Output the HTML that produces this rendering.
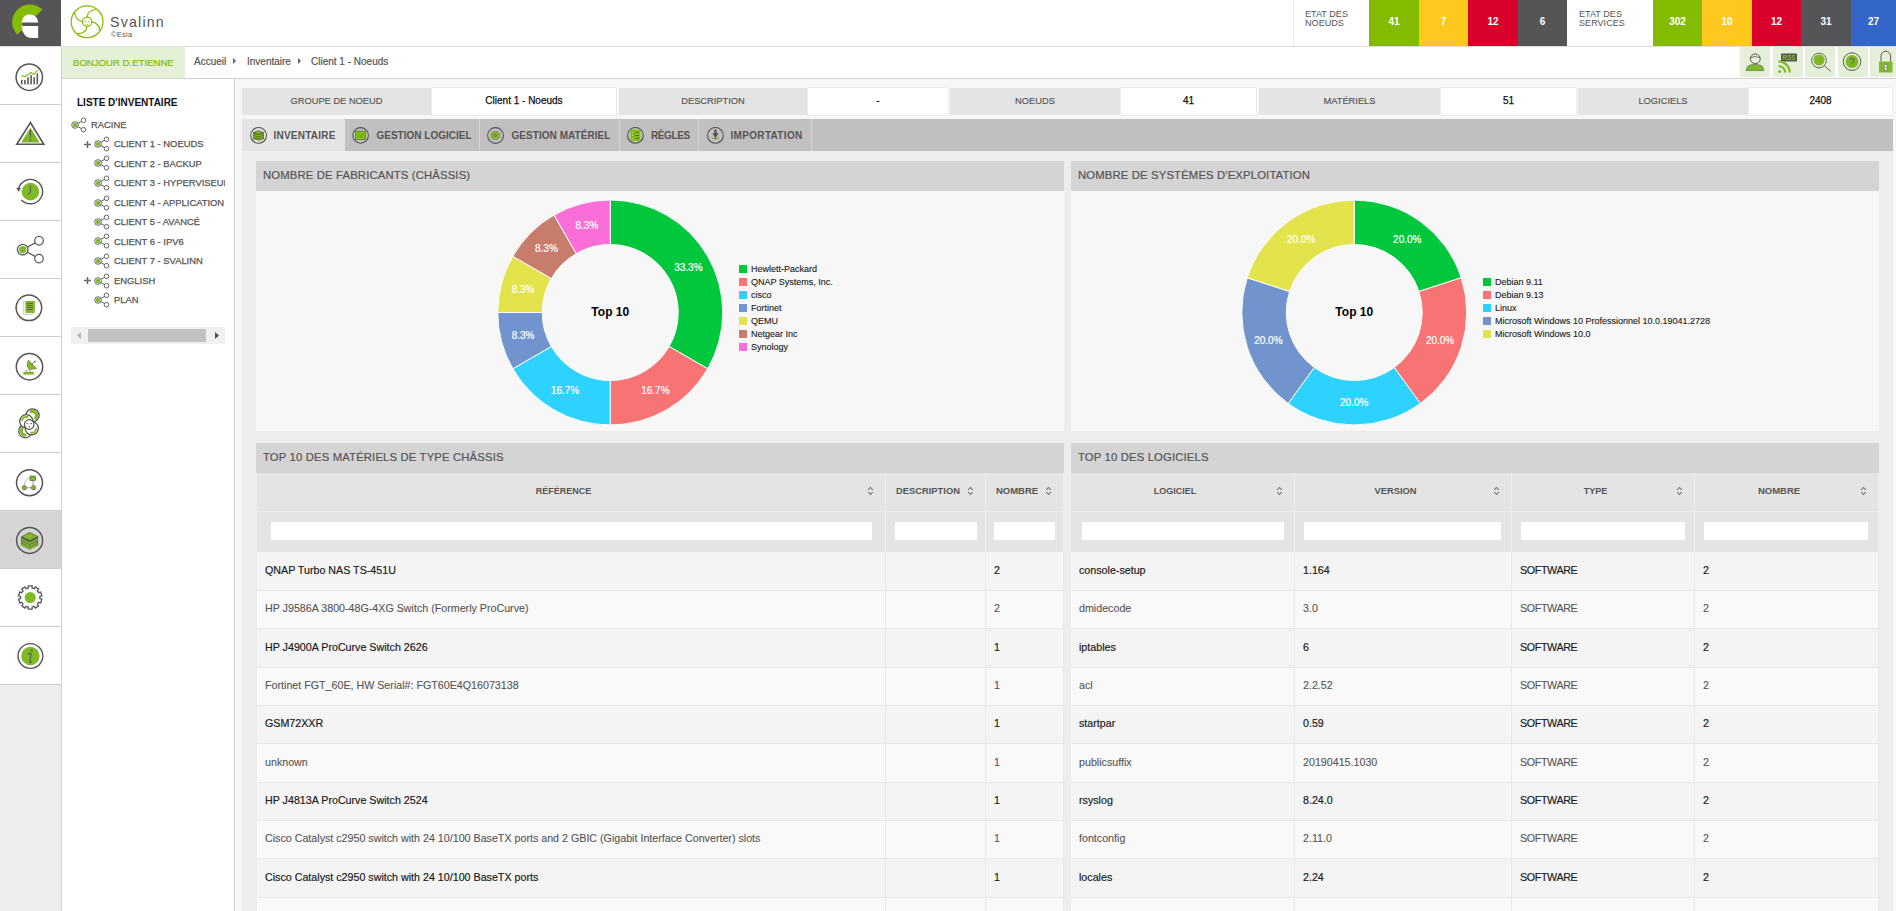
<!DOCTYPE html>
<html><head><meta charset="utf-8">
<style>
*{box-sizing:border-box;margin:0;padding:0}
html,body{width:1896px;height:911px;overflow:hidden;background:#f7f7f7;font-family:"Liberation Sans",sans-serif;color:#555}
.abs{position:absolute}
#logo{left:0;top:0;width:61px;height:46px;background:#555557}
#header{left:0;top:0;width:1896px;height:47px;background:#fff;border-bottom:1px solid #dedede}
#nav{left:0;top:47px;width:62px;height:864px;background:#ededed;border-right:1px solid #d0d0d0}
.ni{position:absolute;left:0;width:61px;height:58px;background:#fff;border-bottom:1px solid #d0d0d0}
.ni.sel{background:#d6d4d5;border-top:1px solid #d0d0d0;margin-top:-1px;height:59px}
#bread{left:62px;top:47px;width:1834px;height:32px;background:#fff;border-bottom:1px solid #d0d0d0}
#bonjour{left:62px;top:47px;width:123px;height:31px;background:#e5f0d9;color:#84bd00;-webkit-text-stroke:0.2px #84bd00;font-size:9.6px;line-height:31px;padding-left:11px;white-space:nowrap}
.bc{top:56px;font-size:10px;color:#555;white-space:nowrap;line-height:12px;-webkit-text-stroke:0.2px #555}
.bca{top:58px;width:0;height:0;border-top:3.5px solid transparent;border-bottom:3.5px solid transparent;border-left:3.5px solid #666}
.hib{top:47px;width:30px;height:30px;background:#e5efd9}
#tree{left:62px;top:79px;width:173px;height:832px;background:#fff;border-right:1px solid #d0d0d0;overflow:hidden}
.tt{font-size:10px;font-weight:bold;color:#111;white-space:nowrap;line-height:12px}
.ti{font-size:9.4px;color:#555;white-space:nowrap;line-height:12px;-webkit-text-stroke:0.25px #555}
.plus{font-size:12px;color:#555;line-height:12px;font-weight:bold}
#main{left:235px;top:79px;width:1661px;height:832px;background:#f7f7f7}
.il{-webkit-text-stroke:0.15px #555;top:88px;height:27px;background:#e4e4e4;font-size:9.3px;line-height:27px;text-align:center;color:#555;white-space:nowrap}
.iv{-webkit-text-stroke:0.25px #111;top:87px;height:29px;background:#fff;border:1px solid #ececec;font-size:10px;line-height:26px;text-align:center;color:#111;white-space:nowrap}
#tabs{left:242px;top:119px;width:1651px;height:32px;background:#c1bfc0}
.tab{top:119px;height:32px;background:#c1bfc0;font-size:10px;font-weight:bold;line-height:12px;color:#555;white-space:nowrap;border-right:1px solid #d6d6d6}
.tab span{position:absolute;top:10.6px}
.tab.act{background:#e4e4e4;border-right:none}
.tab svg{position:absolute;left:8px;top:7.5px}
#cont{left:242px;top:151px;width:1651px;height:760px;background:#ededed}
.ph{-webkit-text-stroke:0.2px #555;height:30px;background:#d4d4d4;font-size:11.3px;letter-spacing:0.15px;line-height:28px;padding-left:7px;color:#555;white-space:nowrap}
.pb{background:#f7f7f7}
.th{background:#e4e4e4;border-right:1px solid #eeeeee}
.thl{font-size:9px;font-weight:bold;color:#555;text-align:center;line-height:12px;white-space:nowrap}
.tf{background:#e4e4e4;border-top:1px solid #ececec;border-right:1px solid #eeeeee}
.inp{position:absolute;top:10px;height:18px;background:#fff}
.td{border-right:1px solid #e8e8e8;border-bottom:1px solid #e8e8e8;font-size:10.7px;line-height:38px;padding-left:8px;white-space:nowrap;overflow:hidden}
svg text{font-family:"Liberation Sans",sans-serif}
</style></head><body>
<div id="header" class="abs"></div>
<div id="logo" class="abs"></div>
<svg class="abs" style="left:0;top:0" width="61" height="46" viewBox="0 0 61 46">
  <path d="M42.4,9.6 A17.6,17.6 0 1 0 17.4,34.8 L24.1,27.9 A8.3,8.3 0 0 1 35.8,16.2 Z" fill="#84bd00"/>
  <path d="M21.6,22.5 A8.3,8.3 0 0 1 38.2,22.5 Z" fill="#fff"/>
  <path d="M21.7,26 L38.1,26 L38.1,37.9 L30.5,37.9 A9,11.9 0 0 1 21.7,26 Z" fill="#fff"/>
</svg>
<svg class="abs" style="left:68px;top:3px" width="40" height="38" viewBox="0 0 40 38">
  <g fill="none" stroke="#84bd00" stroke-width="1.25">
   <circle cx="19.1" cy="18.8" r="15.9"/>
   <circle cx="19.1" cy="18.8" r="4.6"/>
   <path d="M14.5,18.3 C10,18 6.8,14.5 6.6,9.1"/>
   <path d="M19.1,14.2 C19.3,10 22,7 28.1,6.5"/>
   <path d="M23.7,18.8 C28,19 31.5,23 32,27.1"/>
   <path d="M18.9,23.4 C18.8,28 16,30.5 9.2,30.6"/>
  </g>
  <path d="M16.5,18.5 h1.5 M20.2,18.5 h1.6" stroke="#84bd00" stroke-width="0.9"/>
  <circle cx="19.1" cy="21.4" r="0.7" fill="#84bd00"/>
</svg>
<div class="abs" style="left:110px;top:14px;font-size:14.2px;letter-spacing:1.2px;color:#555;line-height:16px;white-space:nowrap">Svalinn</div>
<div class="abs" style="left:111px;top:31px;font-size:7.6px;letter-spacing:0.2px;color:#555;line-height:8px;white-space:nowrap">©Esia</div>

<div class="abs" style="left:1293px;top:0;width:1px;height:46px;background:#e6e6e6"></div>
<div class="abs" style="left:1305px;top:10px;font-size:9.1px;line-height:8.6px;color:#555;white-space:nowrap">ETAT DES<br>NOEUDS</div>
<div class="abs sb" style="left:1369px;width:50px;background:#84bb00">41</div>
<div class="abs sb" style="left:1419px;width:49px;background:#fec81e">7</div>
<div class="abs sb" style="left:1468px;width:50px;background:#d9002c">12</div>
<div class="abs sb" style="left:1518px;width:49px;background:#555557">6</div>
<div class="abs" style="left:1579px;top:10px;font-size:9.1px;line-height:8.6px;color:#555;white-space:nowrap">ETAT DES<br>SERVICES</div>
<div class="abs sb" style="left:1653px;width:49px;background:#84bb00">302</div>
<div class="abs sb" style="left:1702px;width:50px;background:#fec81e">10</div>
<div class="abs sb" style="left:1752px;width:49px;background:#d9002c">12</div>
<div class="abs sb" style="left:1801px;width:50px;background:#555557">31</div>
<div class="abs sb" style="left:1851px;width:45px;background:#3465c8">27</div>
<style>.sb{top:0;height:46px;color:#fff;font-weight:bold;font-size:10px;line-height:43px;text-align:center}</style>

<div id="nav" class="abs">
<div class="ni" style="top:0px"></div>
<div class="ni" style="top:58px"></div>
<div class="ni" style="top:116px"></div>
<div class="ni" style="top:174px"></div>
<div class="ni" style="top:232px"></div>
<div class="ni" style="top:290px"></div>
<div class="ni" style="top:348px"></div>
<div class="ni" style="top:406px"></div>
<div class="ni sel" style="top:464px"></div>
<div class="ni" style="top:522px"></div>
<div class="ni" style="top:580px"></div>
<svg class="abs" style="left:0;top:-47px" width="61" height="911" viewBox="0 0 61 911"><circle cx="29.3" cy="77.2" r="13.2" fill="none" stroke="#555" stroke-width="1.5"/>
<rect x="21.0" y="79.9" width="1.6" height="4.5" fill="#5a5a5a"/>
<rect x="24.099999999999998" y="80.0" width="1.6" height="4.400000000000006" fill="#5a5a5a"/>
<rect x="27.2" y="77.2" width="1.6" height="7.200000000000003" fill="#5a5a5a"/>
<rect x="30.3" y="75.1" width="1.6" height="9.300000000000011" fill="#5a5a5a"/>
<rect x="33.400000000000006" y="77.2" width="1.6" height="7.200000000000003" fill="#5a5a5a"/>
<rect x="36.5" y="73.4" width="1.6" height="11.0" fill="#5a5a5a"/>
<polyline points="21.5,75.8 24.8,76.5 28,74.8 31,72.5 34,74.5 37.3,70.2" fill="none" stroke="#7fba26" stroke-width="1.2"/>
<path d="M30.4,122.6 L16.8,144.3 L43.8,144.3 Z" fill="none" stroke="#555" stroke-width="1.6" stroke-linejoin="miter"/>
<path d="M30.4,127.6 L21.2,142.6 L39.6,142.6 Z" fill="#7fba26"/>
<path d="M29.5,130 L31.1,130 L30.7,138.3 L29.9,138.3 Z" fill="#555"/><circle cx="30.3" cy="140.3" r="0.9" fill="#555"/>
<circle cx="30.4" cy="191.6" r="8.8" fill="#7fba26"/>
<path d="M21.77,200.23 A12.2,12.2 0 1 0 18.62,188.44" fill="none" stroke="#555" stroke-width="1.4" stroke-linecap="round"/>
<path d="M16.2,187.8 L21,188 L18.5,191.8 Z" fill="#555"/>
<polyline points="30.4,185.2 30.4,192.4 27.8,194.6" fill="none" stroke="#555" stroke-width="1"/>
<line x1="22.7" y1="249.6" x2="39" y2="240.8" stroke="#555" stroke-width="1.2"/>
<line x1="22.7" y1="249.6" x2="39" y2="258.6" stroke="#555" stroke-width="1.2"/>
<circle cx="22.7" cy="249.6" r="5.3" fill="#fff" stroke="#555" stroke-width="1.3"/>
<circle cx="22.7" cy="249.6" r="3.7" fill="#7fba26"/>
<circle cx="39" cy="240.8" r="4.3" fill="#fff" stroke="#555" stroke-width="1.2"/>
<circle cx="39" cy="258.6" r="4.3" fill="#fff" stroke="#555" stroke-width="1.2"/>
<circle cx="28.9" cy="307.8" r="12.8" fill="none" stroke="#555" stroke-width="1.5"/>
<rect x="23.2" y="302" width="9.5" height="12.6" fill="#f4f4f4" stroke="#bbb" stroke-width="0.6"/>
<rect x="25.4" y="301" width="9.4" height="11.9" fill="#7fba26"/>
<rect x="27" y="303.20000000000005" width="5.8" height="0.8" fill="#555"/>
<rect x="27" y="305.20000000000005" width="5.8" height="0.8" fill="#555"/>
<rect x="27" y="307.20000000000005" width="5.8" height="0.8" fill="#555"/>
<rect x="27" y="309.20000000000005" width="5.8" height="0.8" fill="#555"/>
<circle cx="29.5" cy="366.7" r="13.2" fill="none" stroke="#555" stroke-width="1.5"/>
<path d="M28.4,360 C26,364 27,369.5 31,369.5 L36.6,368.6 Z" fill="#7fba26" stroke="#555" stroke-width="0.5"/>
<line x1="31.5" y1="364.5" x2="35" y2="361.5" stroke="#555" stroke-width="0.8"/><circle cx="35" cy="361.5" r="0.8" fill="#555"/>
<path d="M27.5,369.5 L26,371.8 M29,369.5 L30.5,371.8" stroke="#555" stroke-width="0.7"/>
<rect x="23.4" y="371.8" width="10.5" height="2.8" fill="#7fba26"/>
<circle cx="32.5" cy="415.4" r="6.6" fill="#fff" stroke="#555" stroke-width="1.3"/>
<circle cx="25.3" cy="431.2" r="6.6" fill="#fff" stroke="#555" stroke-width="1.3"/>
<circle cx="26.3" cy="421.3" r="6.6" fill="#fff" stroke="#555" stroke-width="1.3"/>
<circle cx="31.8" cy="428.3" r="6.6" fill="#fff" stroke="#555" stroke-width="1.3"/>
<path d="M31.13,411.64 A4.0,4.0 0 0 1 35.56,417.97" fill="none" stroke="#7fba26" stroke-width="3.2" stroke-linecap="round"/>
<path d="M24.95,435.18 A4.0,4.0 0 0 1 22.02,428.91" fill="none" stroke="#7fba26" stroke-width="3.2" stroke-linecap="round"/>
<path d="M22.05,420.16 A4.4,4.4 0 0 1 27.44,417.05" fill="none" stroke="#7fba26" stroke-width="2.0" stroke-linecap="round"/>
<path d="M36.13,429.06 A4.4,4.4 0 0 1 31.04,432.63" fill="none" stroke="#7fba26" stroke-width="2.0" stroke-linecap="round"/>
<circle cx="29.2" cy="424.5" r="4.8" fill="#fff" stroke="#555" stroke-width="1.2"/>
<path d="M26.4,423.6 h1.8 M30.3,423.6 h1.8" stroke="#555" stroke-width="0.9"/><circle cx="29.2" cy="426.8" r="0.75" fill="#555"/>
<circle cx="29.5" cy="482.7" r="13.0" fill="none" stroke="#555" stroke-width="1.5"/>
<rect x="30" y="476" width="5.6" height="4.6" fill="#7fba26" stroke="#555" stroke-width="0.6"/>
<circle cx="24.3" cy="487.8" r="2.2" fill="#7fba26" stroke="#555" stroke-width="0.6"/>
<circle cx="33.5" cy="487.8" r="2.2" fill="#7fba26" stroke="#555" stroke-width="0.6"/>
<path d="M29.8,478 C26.5,478.5 24.5,481.5 24.3,485.3" fill="none" stroke="#555" stroke-width="0.6" stroke-dasharray="0.8 0.5"/>
<path d="M33,480.6 V485.6 M26.6,487.8 H31.2" stroke="#555" stroke-width="0.6"/>
<circle cx="29.6" cy="540.4" r="13.0" fill="none" stroke="#555" stroke-width="1.5"/>
<path d="M21.2,536.4 L29.7,532 L38.2,536.4 L38.2,545.2 L29.7,549.8 L21.2,545.2 Z" fill="#555"/>
<path d="M21.9,538.3 L29.7,542.4 L37.5,538.3 L37.5,540.2 L29.7,544.3 L21.9,540.2 Z" fill="#7fba26"/>
<path d="M21.9,540.9 L29.7,545.0 L37.5,540.9 L37.5,542.8000000000001 L29.7,546.9 L21.9,542.8000000000001 Z" fill="#7fba26"/>
<path d="M21.9,543.5 L29.7,547.6 L37.5,543.5 L37.5,545.4000000000001 L29.7,549.5 L21.9,545.4000000000001 Z" fill="#7fba26"/>
<path d="M22.3,536.4 L29.7,532.8 L37.1,536.4 L29.7,540.2 Z" fill="#7fba26"/>
<polygon points="27.20,588.27 28.27,587.99 28.25,585.86 32.15,585.86 32.13,587.99 33.20,588.27 33.20,588.27 34.22,588.67 35.47,586.94 38.62,589.23 37.35,590.95 38.05,591.80 38.05,591.80 38.64,592.72 40.67,592.05 41.87,595.76 39.84,596.40 39.90,597.50 39.90,597.50 39.84,598.60 41.87,599.24 40.67,602.95 38.64,602.28 38.05,603.20 38.05,603.20 37.35,604.05 38.62,605.77 35.47,608.06 34.22,606.33 33.20,606.73 33.20,606.73 32.13,607.01 32.15,609.14 28.25,609.14 28.27,607.01 27.20,606.73 27.20,606.73 26.18,606.33 24.93,608.06 21.78,605.77 23.05,604.05 22.35,603.20 22.35,603.20 21.76,602.28 19.73,602.95 18.53,599.24 20.56,598.60 20.50,597.50 20.50,597.50 20.56,596.40 18.53,595.76 19.73,592.05 21.76,592.72 22.35,591.80 22.35,591.80 23.05,590.95 21.78,589.23 24.93,586.94 26.18,588.67 27.20,588.27" fill="none" stroke="#555" stroke-width="1.3" stroke-linejoin="miter"/>
<circle cx="30.2" cy="597.5" r="5.5" fill="#7fba26"/>
<circle cx="30.4" cy="656" r="12.4" fill="none" stroke="#555" stroke-width="1.4"/>
<circle cx="30.4" cy="656" r="9.2" fill="#7fba26"/>
<circle cx="31.7" cy="650.5" r="1.0" fill="#555"/>
<path d="M28.3,654.2 C29.5,653 31.2,653 31,654.5 L29.8,661.5 C29.7,662.5 30.5,662.6 31.5,662" fill="none" stroke="#555" stroke-width="1.1" stroke-linecap="round"/></svg>
</div>

<div id="bread" class="abs"></div>
<div id="bonjour" class="abs">BONJOUR D.ETIENNE</div>
<div class="abs bc" style="left:194px">Accueil</div>
<div class="abs bca" style="left:233px"></div>
<div class="abs bc" style="left:247px">Inventaire</div>
<div class="abs bca" style="left:298px"></div>
<div class="abs bc" style="left:311px">Client 1 - Noeuds</div>

<div class="abs hib" style="left:1740px"></div>
<div class="abs hib" style="left:1773px"></div>
<div class="abs hib" style="left:1805px"></div>
<div class="abs hib" style="left:1838px"></div>
<div class="abs hib" style="left:1870px;width:26px"></div>
<svg class="abs" style="left:1730px;top:44px" width="166" height="40" viewBox="0 0 166 40">
  <!-- user -->
  <circle cx="25.3" cy="14.8" r="4.9" fill="none" stroke="#555" stroke-width="1"/>
  <path d="M20.5,13.8 C23,12.3 27.6,12.3 30.1,13.8" fill="none" stroke="#555" stroke-width="0.8"/>
  <path d="M16,26.6 L17.5,22.6 C19,21 22,20.5 25,20.5 C28,20.5 31,21 32.5,22.6 L34,26.6 Z" fill="#7fba26" stroke="#555" stroke-width="0.6"/>
  <!-- rss -->
  <rect x="51" y="9.5" width="16" height="8" rx="1" fill="#555"/>
  <text x="59" y="16.3" text-anchor="middle" font-size="6.5" font-weight="bold" fill="#7fba26">RSS</text>
  <circle cx="49.6" cy="27.6" r="1.5" fill="#7fba26"/>
  <path d="M48.6,22 A6.6,6.6 0 0 1 55.2,28.6" fill="none" stroke="#7fba26" stroke-width="2.2"/>
  <path d="M48.6,17.4 A11.2,11.2 0 0 1 59.8,28.6" fill="none" stroke="#7fba26" stroke-width="2.2"/>
  <!-- search -->
  <circle cx="89" cy="16.5" r="7.4" fill="none" stroke="#555" stroke-width="0.9"/>
  <circle cx="89" cy="16" r="5.6" fill="#7fba26"/>
  <line x1="94.3" y1="21.8" x2="100.8" y2="27.5" stroke="#555" stroke-width="0.9"/>
  <!-- help -->
  <circle cx="122" cy="17.6" r="8.8" fill="none" stroke="#555" stroke-width="1"/>
  <circle cx="122" cy="17.6" r="6.5" fill="#7fba26"/>
  <text x="122" y="21.6" text-anchor="middle" font-size="10" fill="#555">?</text>
  <!-- lock -->
  <path d="M151,17.5 V12 A4.8,4.8 0 0 1 160.6,12 V17.5" fill="none" stroke="#555" stroke-width="1"/>
  <rect x="149" y="17.5" width="13.5" height="11" fill="#7fba26"/>
  <circle cx="155.7" cy="22" r="1.6" fill="#fff" stroke="#555" stroke-width="0.5"/>
  <path d="M154.7,23 L154.3,26.3 L157.1,26.3 L156.7,23 Z" fill="#fff" stroke="#555" stroke-width="0.5"/>
</svg>

<div id="tree" class="abs">
<div class="abs tt" style="left:15px;top:17.5px">LISTE D'INVENTAIRE</div>
<div class="abs" style="left:0;top:0;width:163px;height:300px;overflow:hidden">
<svg class="abs" style="left:9px;top:38px" width="16" height="16" viewBox="0 0 16 16"><line x1="4" y1="8" x2="12.5" y2="3.3" stroke="#555" stroke-width="0.9"/><line x1="4" y1="8" x2="12.5" y2="12.7" stroke="#555" stroke-width="0.9"/><circle cx="4" cy="8" r="3.3" fill="#fff" stroke="#555" stroke-width="0.9"/><circle cx="4" cy="8" r="2.2" fill="#7fba26"/><circle cx="12.5" cy="3.3" r="2.3" fill="#fff" stroke="#555" stroke-width="0.9"/><circle cx="12.5" cy="12.7" r="2.3" fill="#fff" stroke="#555" stroke-width="0.9"/></svg>
<div class="abs ti" style="left:29px;top:39.5px">RACINE</div>
<svg class="abs" style="left:32px;top:57px" width="16" height="16" viewBox="0 0 16 16"><line x1="4" y1="8" x2="12.5" y2="3.3" stroke="#555" stroke-width="0.9"/><line x1="4" y1="8" x2="12.5" y2="12.7" stroke="#555" stroke-width="0.9"/><circle cx="4" cy="8" r="3.3" fill="#fff" stroke="#555" stroke-width="0.9"/><circle cx="4" cy="8" r="2.2" fill="#7fba26"/><circle cx="12.5" cy="3.3" r="2.3" fill="#fff" stroke="#555" stroke-width="0.9"/><circle cx="12.5" cy="12.7" r="2.3" fill="#fff" stroke="#555" stroke-width="0.9"/></svg>
<div class="abs ti" style="left:52px;top:59.0px">CLIENT 1 - NOEUDS</div>
<svg class="abs" style="left:20.5px;top:60.5px" width="9" height="9" viewBox="0 0 9 9"><path d="M1,4.5 H8 M4.5,1 V8" stroke="#666" stroke-width="1.5"/></svg>
<svg class="abs" style="left:32px;top:76px" width="16" height="16" viewBox="0 0 16 16"><line x1="4" y1="8" x2="12.5" y2="3.3" stroke="#555" stroke-width="0.9"/><line x1="4" y1="8" x2="12.5" y2="12.7" stroke="#555" stroke-width="0.9"/><circle cx="4" cy="8" r="3.3" fill="#fff" stroke="#555" stroke-width="0.9"/><circle cx="4" cy="8" r="2.2" fill="#7fba26"/><circle cx="12.5" cy="3.3" r="2.3" fill="#fff" stroke="#555" stroke-width="0.9"/><circle cx="12.5" cy="12.7" r="2.3" fill="#fff" stroke="#555" stroke-width="0.9"/></svg>
<div class="abs ti" style="left:52px;top:78.5px">CLIENT 2 - BACKUP</div>
<svg class="abs" style="left:32px;top:96px" width="16" height="16" viewBox="0 0 16 16"><line x1="4" y1="8" x2="12.5" y2="3.3" stroke="#555" stroke-width="0.9"/><line x1="4" y1="8" x2="12.5" y2="12.7" stroke="#555" stroke-width="0.9"/><circle cx="4" cy="8" r="3.3" fill="#fff" stroke="#555" stroke-width="0.9"/><circle cx="4" cy="8" r="2.2" fill="#7fba26"/><circle cx="12.5" cy="3.3" r="2.3" fill="#fff" stroke="#555" stroke-width="0.9"/><circle cx="12.5" cy="12.7" r="2.3" fill="#fff" stroke="#555" stroke-width="0.9"/></svg>
<div class="abs ti" style="left:52px;top:98.0px">CLIENT 3 - HYPERVISEUR</div>
<svg class="abs" style="left:32px;top:116px" width="16" height="16" viewBox="0 0 16 16"><line x1="4" y1="8" x2="12.5" y2="3.3" stroke="#555" stroke-width="0.9"/><line x1="4" y1="8" x2="12.5" y2="12.7" stroke="#555" stroke-width="0.9"/><circle cx="4" cy="8" r="3.3" fill="#fff" stroke="#555" stroke-width="0.9"/><circle cx="4" cy="8" r="2.2" fill="#7fba26"/><circle cx="12.5" cy="3.3" r="2.3" fill="#fff" stroke="#555" stroke-width="0.9"/><circle cx="12.5" cy="12.7" r="2.3" fill="#fff" stroke="#555" stroke-width="0.9"/></svg>
<div class="abs ti" style="left:52px;top:117.5px">CLIENT 4 - APPLICATION</div>
<svg class="abs" style="left:32px;top:135px" width="16" height="16" viewBox="0 0 16 16"><line x1="4" y1="8" x2="12.5" y2="3.3" stroke="#555" stroke-width="0.9"/><line x1="4" y1="8" x2="12.5" y2="12.7" stroke="#555" stroke-width="0.9"/><circle cx="4" cy="8" r="3.3" fill="#fff" stroke="#555" stroke-width="0.9"/><circle cx="4" cy="8" r="2.2" fill="#7fba26"/><circle cx="12.5" cy="3.3" r="2.3" fill="#fff" stroke="#555" stroke-width="0.9"/><circle cx="12.5" cy="12.7" r="2.3" fill="#fff" stroke="#555" stroke-width="0.9"/></svg>
<div class="abs ti" style="left:52px;top:137.0px">CLIENT 5 - AVANCÉ</div>
<svg class="abs" style="left:32px;top:154px" width="16" height="16" viewBox="0 0 16 16"><line x1="4" y1="8" x2="12.5" y2="3.3" stroke="#555" stroke-width="0.9"/><line x1="4" y1="8" x2="12.5" y2="12.7" stroke="#555" stroke-width="0.9"/><circle cx="4" cy="8" r="3.3" fill="#fff" stroke="#555" stroke-width="0.9"/><circle cx="4" cy="8" r="2.2" fill="#7fba26"/><circle cx="12.5" cy="3.3" r="2.3" fill="#fff" stroke="#555" stroke-width="0.9"/><circle cx="12.5" cy="12.7" r="2.3" fill="#fff" stroke="#555" stroke-width="0.9"/></svg>
<div class="abs ti" style="left:52px;top:156.5px">CLIENT 6 - IPV6</div>
<svg class="abs" style="left:32px;top:174px" width="16" height="16" viewBox="0 0 16 16"><line x1="4" y1="8" x2="12.5" y2="3.3" stroke="#555" stroke-width="0.9"/><line x1="4" y1="8" x2="12.5" y2="12.7" stroke="#555" stroke-width="0.9"/><circle cx="4" cy="8" r="3.3" fill="#fff" stroke="#555" stroke-width="0.9"/><circle cx="4" cy="8" r="2.2" fill="#7fba26"/><circle cx="12.5" cy="3.3" r="2.3" fill="#fff" stroke="#555" stroke-width="0.9"/><circle cx="12.5" cy="12.7" r="2.3" fill="#fff" stroke="#555" stroke-width="0.9"/></svg>
<div class="abs ti" style="left:52px;top:176.0px">CLIENT 7 - SVALINN</div>
<svg class="abs" style="left:32px;top:194px" width="16" height="16" viewBox="0 0 16 16"><line x1="4" y1="8" x2="12.5" y2="3.3" stroke="#555" stroke-width="0.9"/><line x1="4" y1="8" x2="12.5" y2="12.7" stroke="#555" stroke-width="0.9"/><circle cx="4" cy="8" r="3.3" fill="#fff" stroke="#555" stroke-width="0.9"/><circle cx="4" cy="8" r="2.2" fill="#7fba26"/><circle cx="12.5" cy="3.3" r="2.3" fill="#fff" stroke="#555" stroke-width="0.9"/><circle cx="12.5" cy="12.7" r="2.3" fill="#fff" stroke="#555" stroke-width="0.9"/></svg>
<div class="abs ti" style="left:52px;top:195.5px">ENGLISH</div>
<svg class="abs" style="left:20.5px;top:197.0px" width="9" height="9" viewBox="0 0 9 9"><path d="M1,4.5 H8 M4.5,1 V8" stroke="#666" stroke-width="1.5"/></svg>
<svg class="abs" style="left:32px;top:213px" width="16" height="16" viewBox="0 0 16 16"><line x1="4" y1="8" x2="12.5" y2="3.3" stroke="#555" stroke-width="0.9"/><line x1="4" y1="8" x2="12.5" y2="12.7" stroke="#555" stroke-width="0.9"/><circle cx="4" cy="8" r="3.3" fill="#fff" stroke="#555" stroke-width="0.9"/><circle cx="4" cy="8" r="2.2" fill="#7fba26"/><circle cx="12.5" cy="3.3" r="2.3" fill="#fff" stroke="#555" stroke-width="0.9"/><circle cx="12.5" cy="12.7" r="2.3" fill="#fff" stroke="#555" stroke-width="0.9"/></svg>
<div class="abs ti" style="left:52px;top:215.0px">PLAN</div>
</div>
<div class="abs" style="left:9px;top:248px;width:154px;height:17px;background:#f0f0f0"></div>
<div class="abs" style="left:26px;top:250px;width:118px;height:13px;background:#c2c2c2"></div>
<svg class="abs" style="left:13px;top:252px" width="8" height="9"><path d="M6,1 L2,4.5 L6,8 Z" fill="#b5b5b5"/></svg>
<svg class="abs" style="left:151px;top:252px" width="8" height="9"><path d="M2,1 L6,4.5 L2,8 Z" fill="#505050"/></svg>
</div>

<div id="main" class="abs"></div>
<!-- info row -->
<div class="abs il" style="left:242px;width:189px">GROUPE DE NOEUD</div>
<div class="abs iv" style="left:431px;width:186px">Client 1 - Noeuds</div>
<div class="abs il" style="left:619px;width:188px">DESCRIPTION</div>
<div class="abs iv" style="left:807px;width:142px">-</div>
<div class="abs il" style="left:950px;width:170px">NOEUDS</div>
<div class="abs iv" style="left:1120px;width:137px">41</div>
<div class="abs il" style="left:1259px;width:181px">MATÉRIELS</div>
<div class="abs iv" style="left:1440px;width:137px">51</div>
<div class="abs il" style="left:1578px;width:170px">LOGICIELS</div>
<div class="abs iv" style="left:1748px;width:145px">2408</div>

<div id="tabs" class="abs"></div>
<div id="cont" class="abs"></div>
<div class="abs tab act" style="left:242px;width:103px"><span style="left:31.5px;letter-spacing:0.22px">INVENTAIRE</span></div>
<div class="abs tab" style="left:345px;width:135px"><span style="left:31.5px">GESTION LOGICIEL</span></div>
<div class="abs tab" style="left:480px;width:140px"><span style="left:31.5px;letter-spacing:0.05px">GESTION MATÉRIEL</span></div>
<div class="abs tab" style="left:620px;width:79px"><span style="left:31px;letter-spacing:-0.4px">RÈGLES</span></div>
<div class="abs tab" style="left:699px;width:113px"><span style="left:31.5px;letter-spacing:0.32px">IMPORTATION</span></div>

<svg class="abs" style="left:0;top:0" width="800" height="160" viewBox="0 0 800 160">
 <g fill="none" stroke="#555" stroke-width="1.1">
  <circle cx="258.6" cy="135.4" r="7.9"/>
  <circle cx="360.6" cy="135.4" r="7.8"/>
  <circle cx="495.5" cy="135.5" r="7.9"/>
  <circle cx="635.4" cy="135.4" r="7.9"/>
  <circle cx="715.4" cy="135.4" r="7.9"/>
 </g>
 <!-- inventaire stack -->
 <path d="M253.1,132.2 L258.5,130.2 L263.9,132.2 L263.9,139 L258.5,140.8 L253.1,139 Z" fill="#555"/>
 <path d="M254.2,132.4 L258.5,130.9 L262.8,132.4 L258.5,134 Z" fill="#7fc400"/>
 <path d="M253.6,133.6 L258.5,135.3 L263.4,133.6 L263.4,134.8 L258.5,136.5 L253.6,134.8 Z" fill="#7fc400"/>
 <path d="M253.6,135.6 L258.5,137.3 L263.4,135.6 L263.4,136.8 L258.5,138.5 L253.6,136.8 Z" fill="#7fc400"/>
 <path d="M253.6,137.6 L258.5,139.3 L263.4,137.6 L263.4,138.6 L258.5,140.2 L253.6,138.6 Z" fill="#7fc400"/>
 <!-- logiciel -->
 <rect x="355.6" y="131.1" width="10" height="8.3" fill="#7fc400" stroke="#555" stroke-width="0.6"/>
 <path d="M358.3,134.8 L357.3,136 L358.3,137.2 M362.9,134.8 L363.9,136 L362.9,137.2 M361.3,134.2 L360,137.6" fill="none" stroke="#555" stroke-width="0.55"/>
 <circle cx="359.7" cy="132.4" r="0.45" fill="#555"/>
 <!-- materiel chip -->
 <path d="M493,131.2 v1 M494.5,131.2 v1 M496,131.2 v1 M497.5,131.2 v1 M493,138.8 v1 M494.5,138.8 v1 M496,138.8 v1 M497.5,138.8 v1 M490.8,133 h1 M490.8,134.5 h1 M490.8,136 h1 M490.8,137.5 h1 M499.2,133 h1 M499.2,134.5 h1 M499.2,136 h1 M499.2,137.5 h1" stroke="#555" stroke-width="0.8"/>
 <rect x="492" y="132" width="6.9" height="6.9" fill="#7fba26"/>
 <rect x="494.2" y="134.2" width="2.5" height="2.5" fill="none" stroke="#555" stroke-width="0.5"/>
 <!-- regles -->
 <rect x="630.5" y="129.6" width="9.9" height="11.3" fill="#7fc400"/>
 <path d="M635.2,132.4 h3.8 M635.2,135.5 h3.8 M635.2,138.5 h3.8" stroke="#555" stroke-width="0.8"/>
 <circle cx="632.5" cy="132.4" r="0.75" fill="#fff" stroke="#555" stroke-width="0.3"/>
 <circle cx="632.5" cy="135.5" r="0.75" fill="#fff" stroke="#555" stroke-width="0.3"/>
 <circle cx="632.5" cy="138.5" r="0.75" fill="#fff" stroke="#555" stroke-width="0.3"/>
 <!-- importation -->
 <path d="M711,137.2 Q715.4,141.5 719.8,137.2 Q715.4,139 711,137.2 Z" fill="#555"/>
 <path d="M711.8,137.8 Q715.4,141 719,137.8 Q715.4,139.3 711.8,137.8 Z" fill="#7fc400"/>
 <path d="M714.3,129.4 h2.3 v3.9 h2 L715.5,138.3 L712.4,133.3 h1.9 Z" fill="#555"/>
</svg>
<!-- chart panels -->
<div class="abs ph" style="left:256px;top:161px;width:808px">NOMBRE DE FABRICANTS (CHÂSSIS)</div>
<div class="abs pb" style="left:256px;top:191px;width:808px;height:240px"></div>
<div class="abs ph" style="left:1071px;top:161px;width:808px">NOMBRE DE SYSTÈMES D'EXPLOITATION</div>
<div class="abs pb" style="left:1071px;top:191px;width:808px;height:240px"></div>
<svg class="abs" style="left:0;top:0" width="1896" height="911" viewBox="0 0 1896 911">
<path d="M610.25,200.00 A112.5,112.5 0 0 1 707.68,368.75 L669.14,346.50 A68,68 0 0 0 610.25,244.50 Z" fill="#00c73c" stroke="#fff" stroke-width="1"/>
<text x="688.4" y="270.9" text-anchor="middle" fill="#fff" stroke="#fff" stroke-width="0.2" font-size="10">33.3%</text>
<path d="M707.68,368.75 A112.5,112.5 0 0 1 610.25,425.00 L610.25,380.50 A68,68 0 0 0 669.14,346.50 Z" fill="#f87373" stroke="#fff" stroke-width="1"/>
<text x="655.4" y="394.2" text-anchor="middle" fill="#fff" stroke="#fff" stroke-width="0.2" font-size="10">16.7%</text>
<path d="M610.25,425.00 A112.5,112.5 0 0 1 512.82,368.75 L551.36,346.50 A68,68 0 0 0 610.25,380.50 Z" fill="#2ed2ff" stroke="#fff" stroke-width="1"/>
<text x="565.1" y="394.2" text-anchor="middle" fill="#fff" stroke="#fff" stroke-width="0.2" font-size="10">16.7%</text>
<path d="M512.82,368.75 A112.5,112.5 0 0 1 497.75,312.50 L542.25,312.50 A68,68 0 0 0 551.36,346.50 Z" fill="#7194cf" stroke="#fff" stroke-width="1"/>
<text x="523.1" y="339.4" text-anchor="middle" fill="#fff" stroke="#fff" stroke-width="0.2" font-size="10">8.3%</text>
<path d="M497.75,312.50 A112.5,112.5 0 0 1 512.82,256.25 L551.36,278.50 A68,68 0 0 0 542.25,312.50 Z" fill="#e3e34b" stroke="#fff" stroke-width="1"/>
<text x="523.1" y="292.6" text-anchor="middle" fill="#fff" stroke="#fff" stroke-width="0.2" font-size="10">8.3%</text>
<path d="M512.82,256.25 A112.5,112.5 0 0 1 554.00,215.07 L576.25,253.61 A68,68 0 0 0 551.36,278.50 Z" fill="#c87c6c" stroke="#fff" stroke-width="1"/>
<text x="546.4" y="252.2" text-anchor="middle" fill="#fff" stroke="#fff" stroke-width="0.2" font-size="10">8.3%</text>
<path d="M554.00,215.07 A112.5,112.5 0 0 1 610.25,200.00 L610.25,244.50 A68,68 0 0 0 576.25,253.61 Z" fill="#f96ed7" stroke="#fff" stroke-width="1"/>
<text x="586.9" y="228.8" text-anchor="middle" fill="#fff" stroke="#fff" stroke-width="0.2" font-size="10">8.3%</text>
<text x="610.25" y="315.7" text-anchor="middle" fill="#000" font-size="12" font-weight="bold">Top 10</text><rect x="739" y="265" width="8" height="8" fill="#00c73c"/>
<text x="751" y="272" fill="#222" stroke="#222" stroke-width="0.12" font-size="9">Hewlett-Packard</text>
<rect x="739" y="278" width="8" height="8" fill="#f87373"/>
<text x="751" y="285" fill="#222" stroke="#222" stroke-width="0.12" font-size="9">QNAP Systems, Inc.</text>
<rect x="739" y="291" width="8" height="8" fill="#2ed2ff"/>
<text x="751" y="298" fill="#222" stroke="#222" stroke-width="0.12" font-size="9">cisco</text>
<rect x="739" y="304" width="8" height="8" fill="#7194cf"/>
<text x="751" y="311" fill="#222" stroke="#222" stroke-width="0.12" font-size="9">Fortinet</text>
<rect x="739" y="317" width="8" height="8" fill="#e3e34b"/>
<text x="751" y="324" fill="#222" stroke="#222" stroke-width="0.12" font-size="9">QEMU</text>
<rect x="739" y="330" width="8" height="8" fill="#c87c6c"/>
<text x="751" y="337" fill="#222" stroke="#222" stroke-width="0.12" font-size="9">Netgear Inc</text>
<rect x="739" y="343" width="8" height="8" fill="#f96ed7"/>
<text x="751" y="350" fill="#222" stroke="#222" stroke-width="0.12" font-size="9">Synology</text>
<path d="M1354.25,200.00 A112.5,112.5 0 0 1 1461.24,277.74 L1418.92,291.49 A68,68 0 0 0 1354.25,244.50 Z" fill="#00c73c" stroke="#fff" stroke-width="1"/>
<text x="1407.3" y="243.0" text-anchor="middle" fill="#fff" stroke="#fff" stroke-width="0.2" font-size="10">20.0%</text>
<path d="M1461.24,277.74 A112.5,112.5 0 0 1 1420.38,403.51 L1394.22,367.51 A68,68 0 0 0 1418.92,291.49 Z" fill="#f87373" stroke="#fff" stroke-width="1"/>
<text x="1440.1" y="343.9" text-anchor="middle" fill="#fff" stroke="#fff" stroke-width="0.2" font-size="10">20.0%</text>
<path d="M1420.38,403.51 A112.5,112.5 0 0 1 1288.12,403.51 L1314.28,367.51 A68,68 0 0 0 1394.22,367.51 Z" fill="#2ed2ff" stroke="#fff" stroke-width="1"/>
<text x="1354.2" y="406.2" text-anchor="middle" fill="#fff" stroke="#fff" stroke-width="0.2" font-size="10">20.0%</text>
<path d="M1288.12,403.51 A112.5,112.5 0 0 1 1247.26,277.74 L1289.58,291.49 A68,68 0 0 0 1314.28,367.51 Z" fill="#7194cf" stroke="#fff" stroke-width="1"/>
<text x="1268.4" y="343.9" text-anchor="middle" fill="#fff" stroke="#fff" stroke-width="0.2" font-size="10">20.0%</text>
<path d="M1247.26,277.74 A112.5,112.5 0 0 1 1354.25,200.00 L1354.25,244.50 A68,68 0 0 0 1289.58,291.49 Z" fill="#e3e34b" stroke="#fff" stroke-width="1"/>
<text x="1301.2" y="243.0" text-anchor="middle" fill="#fff" stroke="#fff" stroke-width="0.2" font-size="10">20.0%</text>
<text x="1354.25" y="315.7" text-anchor="middle" fill="#000" font-size="12" font-weight="bold">Top 10</text><rect x="1483" y="278" width="8" height="8" fill="#00c73c"/>
<text x="1495" y="285" fill="#222" stroke="#222" stroke-width="0.12" font-size="9">Debian 9.11</text>
<rect x="1483" y="291" width="8" height="8" fill="#f87373"/>
<text x="1495" y="298" fill="#222" stroke="#222" stroke-width="0.12" font-size="9">Debian 9.13</text>
<rect x="1483" y="304" width="8" height="8" fill="#2ed2ff"/>
<text x="1495" y="311" fill="#222" stroke="#222" stroke-width="0.12" font-size="9">Linux</text>
<rect x="1483" y="317" width="8" height="8" fill="#7194cf"/>
<text x="1495" y="324" fill="#222" stroke="#222" stroke-width="0.12" font-size="9">Microsoft Windows 10 Professionnel 10.0.19041.2728</text>
<rect x="1483" y="330" width="8" height="8" fill="#e3e34b"/>
<text x="1495" y="337" fill="#222" stroke="#222" stroke-width="0.12" font-size="9">Microsoft Windows 10.0</text>
</svg>

<!-- table panels -->
<div class="abs ph" style="left:256px;top:443px;width:808px">TOP 10 DES MATÉRIELS DE TYPE CHÂSSIS</div>
<div class="abs ph" style="left:1071px;top:443px;width:808px">TOP 10 DES LOGICIELS</div>
<div class="abs th" style="left:257px;top:473px;width:629px;height:38px"></div>
<div class="abs thl" style="left:257px;top:485px;width:597px;margin-left:0;font-size:9px;padding-left:0;transform:translateX(0)"><div style="width:613px;text-align:center">RÉFÉRENCE</div></div>
<div class="abs" style="left:866.5px;top:486px;line-height:0"><svg width="7" height="10" viewBox="0 0 7 10"><path d="M1.2,4 L3.5,1.5 L5.8,4 M1.2,6 L3.5,8.5 L5.8,6" fill="none" stroke="#6a6a6a" stroke-width="1.1"/></svg></div>
<div class="abs tf" style="left:257px;top:511px;width:629px;height:41px"><div class="inp" style="left:14px;width:601px"></div></div>
<div class="abs th" style="left:886px;top:473px;width:100px;height:38px"></div>
<div class="abs thl" style="left:886px;top:485px;width:68px;margin-left:0;font-size:9.35px;padding-left:0;transform:translateX(0)"><div style="width:84px;text-align:center">DESCRIPTION</div></div>
<div class="abs" style="left:966.5px;top:486px;line-height:0"><svg width="7" height="10" viewBox="0 0 7 10"><path d="M1.2,4 L3.5,1.5 L5.8,4 M1.2,6 L3.5,8.5 L5.8,6" fill="none" stroke="#6a6a6a" stroke-width="1.1"/></svg></div>
<div class="abs tf" style="left:886px;top:511px;width:100px;height:41px"><div class="inp" style="left:9px;width:82px"></div></div>
<div class="abs th" style="left:986px;top:473px;width:78px;height:38px"></div>
<div class="abs thl" style="left:986px;top:485px;width:46px;margin-left:0;font-size:9.5px;padding-left:0;transform:translateX(0)"><div style="width:62px;text-align:center">NOMBRE</div></div>
<div class="abs" style="left:1044.5px;top:486px;line-height:0"><svg width="7" height="10" viewBox="0 0 7 10"><path d="M1.2,4 L3.5,1.5 L5.8,4 M1.2,6 L3.5,8.5 L5.8,6" fill="none" stroke="#6a6a6a" stroke-width="1.1"/></svg></div>
<div class="abs tf" style="left:986px;top:511px;width:78px;height:41px"><div class="inp" style="left:8px;width:61px"></div></div>
<div class="abs td" style="left:257px;top:552px;width:629px;height:39px;line-height:36px;background:#f4f4f4;color:#1a1a1a;-webkit-text-stroke:0.18px #1a1a1a;">QNAP Turbo NAS TS-451U</div>
<div class="abs td" style="left:886px;top:552px;width:100px;height:39px;line-height:36px;background:#f4f4f4;color:#1a1a1a;-webkit-text-stroke:0.18px #1a1a1a;"></div>
<div class="abs td" style="left:986px;top:552px;width:78px;height:39px;line-height:36px;background:#f4f4f4;color:#1a1a1a;-webkit-text-stroke:0.18px #1a1a1a;">2</div>
<div class="abs td" style="left:257px;top:591px;width:629px;height:38px;line-height:35px;background:#f9f9f9;color:#555;-webkit-text-stroke:0.1px #555;">HP J9586A 3800-48G-4XG Switch (Formerly ProCurve)</div>
<div class="abs td" style="left:886px;top:591px;width:100px;height:38px;line-height:35px;background:#f9f9f9;color:#555;-webkit-text-stroke:0.1px #555;"></div>
<div class="abs td" style="left:986px;top:591px;width:78px;height:38px;line-height:35px;background:#f9f9f9;color:#555;-webkit-text-stroke:0.1px #555;">2</div>
<div class="abs td" style="left:257px;top:629px;width:629px;height:39px;line-height:36px;background:#f4f4f4;color:#1a1a1a;-webkit-text-stroke:0.18px #1a1a1a;">HP J4900A ProCurve Switch 2626</div>
<div class="abs td" style="left:886px;top:629px;width:100px;height:39px;line-height:36px;background:#f4f4f4;color:#1a1a1a;-webkit-text-stroke:0.18px #1a1a1a;"></div>
<div class="abs td" style="left:986px;top:629px;width:78px;height:39px;line-height:36px;background:#f4f4f4;color:#1a1a1a;-webkit-text-stroke:0.18px #1a1a1a;">1</div>
<div class="abs td" style="left:257px;top:668px;width:629px;height:38px;line-height:35px;background:#f9f9f9;color:#555;-webkit-text-stroke:0.1px #555;">Fortinet FGT_60E, HW Serial#: FGT60E4Q16073138</div>
<div class="abs td" style="left:886px;top:668px;width:100px;height:38px;line-height:35px;background:#f9f9f9;color:#555;-webkit-text-stroke:0.1px #555;"></div>
<div class="abs td" style="left:986px;top:668px;width:78px;height:38px;line-height:35px;background:#f9f9f9;color:#555;-webkit-text-stroke:0.1px #555;">1</div>
<div class="abs td" style="left:257px;top:706px;width:629px;height:38px;line-height:35px;background:#f4f4f4;color:#1a1a1a;-webkit-text-stroke:0.18px #1a1a1a;">GSM72XXR</div>
<div class="abs td" style="left:886px;top:706px;width:100px;height:38px;line-height:35px;background:#f4f4f4;color:#1a1a1a;-webkit-text-stroke:0.18px #1a1a1a;"></div>
<div class="abs td" style="left:986px;top:706px;width:78px;height:38px;line-height:35px;background:#f4f4f4;color:#1a1a1a;-webkit-text-stroke:0.18px #1a1a1a;">1</div>
<div class="abs td" style="left:257px;top:744px;width:629px;height:39px;line-height:36px;background:#f9f9f9;color:#555;-webkit-text-stroke:0.1px #555;">unknown</div>
<div class="abs td" style="left:886px;top:744px;width:100px;height:39px;line-height:36px;background:#f9f9f9;color:#555;-webkit-text-stroke:0.1px #555;"></div>
<div class="abs td" style="left:986px;top:744px;width:78px;height:39px;line-height:36px;background:#f9f9f9;color:#555;-webkit-text-stroke:0.1px #555;">1</div>
<div class="abs td" style="left:257px;top:783px;width:629px;height:38px;line-height:35px;background:#f4f4f4;color:#1a1a1a;-webkit-text-stroke:0.18px #1a1a1a;">HP J4813A ProCurve Switch 2524</div>
<div class="abs td" style="left:886px;top:783px;width:100px;height:38px;line-height:35px;background:#f4f4f4;color:#1a1a1a;-webkit-text-stroke:0.18px #1a1a1a;"></div>
<div class="abs td" style="left:986px;top:783px;width:78px;height:38px;line-height:35px;background:#f4f4f4;color:#1a1a1a;-webkit-text-stroke:0.18px #1a1a1a;">1</div>
<div class="abs td" style="left:257px;top:821px;width:629px;height:38px;line-height:35px;background:#f9f9f9;color:#555;-webkit-text-stroke:0.1px #555;">Cisco Catalyst c2950 switch with 24 10/100 BaseTX ports and 2 GBIC (Gigabit Interface Converter) slots</div>
<div class="abs td" style="left:886px;top:821px;width:100px;height:38px;line-height:35px;background:#f9f9f9;color:#555;-webkit-text-stroke:0.1px #555;"></div>
<div class="abs td" style="left:986px;top:821px;width:78px;height:38px;line-height:35px;background:#f9f9f9;color:#555;-webkit-text-stroke:0.1px #555;">1</div>
<div class="abs td" style="left:257px;top:859px;width:629px;height:39px;line-height:36px;background:#f4f4f4;color:#1a1a1a;-webkit-text-stroke:0.18px #1a1a1a;">Cisco Catalyst c2950 switch with 24 10/100 BaseTX ports</div>
<div class="abs td" style="left:886px;top:859px;width:100px;height:39px;line-height:36px;background:#f4f4f4;color:#1a1a1a;-webkit-text-stroke:0.18px #1a1a1a;"></div>
<div class="abs td" style="left:986px;top:859px;width:78px;height:39px;line-height:36px;background:#f4f4f4;color:#1a1a1a;-webkit-text-stroke:0.18px #1a1a1a;">1</div>
<div class="abs td" style="left:257px;top:898px;width:629px;height:38px;line-height:35px;background:#f9f9f9;color:#555;-webkit-text-stroke:0.1px #555;"></div>
<div class="abs td" style="left:886px;top:898px;width:100px;height:38px;line-height:35px;background:#f9f9f9;color:#555;-webkit-text-stroke:0.1px #555;"></div>
<div class="abs td" style="left:986px;top:898px;width:78px;height:38px;line-height:35px;background:#f9f9f9;color:#555;-webkit-text-stroke:0.1px #555;"></div>
<div class="abs th" style="left:1071px;top:473px;width:224px;height:38px"></div>
<div class="abs thl" style="left:1071px;top:485px;width:192px;margin-left:0;font-size:9px;padding-left:0;transform:translateX(0)"><div style="width:208px;text-align:center">LOGICIEL</div></div>
<div class="abs" style="left:1275.5px;top:486px;line-height:0"><svg width="7" height="10" viewBox="0 0 7 10"><path d="M1.2,4 L3.5,1.5 L5.8,4 M1.2,6 L3.5,8.5 L5.8,6" fill="none" stroke="#6a6a6a" stroke-width="1.1"/></svg></div>
<div class="abs tf" style="left:1071px;top:511px;width:224px;height:41px"><div class="inp" style="left:11px;width:202px"></div></div>
<div class="abs th" style="left:1295px;top:473px;width:217px;height:38px"></div>
<div class="abs thl" style="left:1295px;top:485px;width:185px;margin-left:0;font-size:9.3px;padding-left:0;transform:translateX(0)"><div style="width:201px;text-align:center">VERSION</div></div>
<div class="abs" style="left:1492.5px;top:486px;line-height:0"><svg width="7" height="10" viewBox="0 0 7 10"><path d="M1.2,4 L3.5,1.5 L5.8,4 M1.2,6 L3.5,8.5 L5.8,6" fill="none" stroke="#6a6a6a" stroke-width="1.1"/></svg></div>
<div class="abs tf" style="left:1295px;top:511px;width:217px;height:41px"><div class="inp" style="left:9px;width:197px"></div></div>
<div class="abs th" style="left:1512px;top:473px;width:183px;height:38px"></div>
<div class="abs thl" style="left:1512px;top:485px;width:151px;margin-left:0;font-size:9px;padding-left:0;transform:translateX(0)"><div style="width:167px;text-align:center">TYPE</div></div>
<div class="abs" style="left:1675.5px;top:486px;line-height:0"><svg width="7" height="10" viewBox="0 0 7 10"><path d="M1.2,4 L3.5,1.5 L5.8,4 M1.2,6 L3.5,8.5 L5.8,6" fill="none" stroke="#6a6a6a" stroke-width="1.1"/></svg></div>
<div class="abs tf" style="left:1512px;top:511px;width:183px;height:41px"><div class="inp" style="left:9px;width:164px"></div></div>
<div class="abs th" style="left:1695px;top:473px;width:184px;height:38px"></div>
<div class="abs thl" style="left:1695px;top:485px;width:152px;margin-left:0;font-size:9.5px;padding-left:0;transform:translateX(0)"><div style="width:168px;text-align:center">NOMBRE</div></div>
<div class="abs" style="left:1859.5px;top:486px;line-height:0"><svg width="7" height="10" viewBox="0 0 7 10"><path d="M1.2,4 L3.5,1.5 L5.8,4 M1.2,6 L3.5,8.5 L5.8,6" fill="none" stroke="#6a6a6a" stroke-width="1.1"/></svg></div>
<div class="abs tf" style="left:1695px;top:511px;width:184px;height:41px"><div class="inp" style="left:9px;width:164px"></div></div>
<div class="abs td" style="left:1071px;top:552px;width:224px;height:39px;line-height:36px;background:#f4f4f4;color:#1a1a1a;-webkit-text-stroke:0.18px #1a1a1a;">console-setup</div>
<div class="abs td" style="left:1295px;top:552px;width:217px;height:39px;line-height:36px;background:#f4f4f4;color:#1a1a1a;-webkit-text-stroke:0.18px #1a1a1a;">1.164</div>
<div class="abs td" style="left:1512px;top:552px;width:183px;height:39px;line-height:36px;background:#f4f4f4;color:#1a1a1a;-webkit-text-stroke:0.18px #1a1a1a;letter-spacing:-0.35px;">SOFTWARE</div>
<div class="abs td" style="left:1695px;top:552px;width:184px;height:39px;line-height:36px;background:#f4f4f4;color:#1a1a1a;-webkit-text-stroke:0.18px #1a1a1a;">2</div>
<div class="abs td" style="left:1071px;top:591px;width:224px;height:38px;line-height:35px;background:#f9f9f9;color:#555;-webkit-text-stroke:0.1px #555;">dmidecode</div>
<div class="abs td" style="left:1295px;top:591px;width:217px;height:38px;line-height:35px;background:#f9f9f9;color:#555;-webkit-text-stroke:0.1px #555;">3.0</div>
<div class="abs td" style="left:1512px;top:591px;width:183px;height:38px;line-height:35px;background:#f9f9f9;color:#555;-webkit-text-stroke:0.1px #555;letter-spacing:-0.35px;">SOFTWARE</div>
<div class="abs td" style="left:1695px;top:591px;width:184px;height:38px;line-height:35px;background:#f9f9f9;color:#555;-webkit-text-stroke:0.1px #555;">2</div>
<div class="abs td" style="left:1071px;top:629px;width:224px;height:39px;line-height:36px;background:#f4f4f4;color:#1a1a1a;-webkit-text-stroke:0.18px #1a1a1a;">iptables</div>
<div class="abs td" style="left:1295px;top:629px;width:217px;height:39px;line-height:36px;background:#f4f4f4;color:#1a1a1a;-webkit-text-stroke:0.18px #1a1a1a;">6</div>
<div class="abs td" style="left:1512px;top:629px;width:183px;height:39px;line-height:36px;background:#f4f4f4;color:#1a1a1a;-webkit-text-stroke:0.18px #1a1a1a;letter-spacing:-0.35px;">SOFTWARE</div>
<div class="abs td" style="left:1695px;top:629px;width:184px;height:39px;line-height:36px;background:#f4f4f4;color:#1a1a1a;-webkit-text-stroke:0.18px #1a1a1a;">2</div>
<div class="abs td" style="left:1071px;top:668px;width:224px;height:38px;line-height:35px;background:#f9f9f9;color:#555;-webkit-text-stroke:0.1px #555;">acl</div>
<div class="abs td" style="left:1295px;top:668px;width:217px;height:38px;line-height:35px;background:#f9f9f9;color:#555;-webkit-text-stroke:0.1px #555;">2.2.52</div>
<div class="abs td" style="left:1512px;top:668px;width:183px;height:38px;line-height:35px;background:#f9f9f9;color:#555;-webkit-text-stroke:0.1px #555;letter-spacing:-0.35px;">SOFTWARE</div>
<div class="abs td" style="left:1695px;top:668px;width:184px;height:38px;line-height:35px;background:#f9f9f9;color:#555;-webkit-text-stroke:0.1px #555;">2</div>
<div class="abs td" style="left:1071px;top:706px;width:224px;height:38px;line-height:35px;background:#f4f4f4;color:#1a1a1a;-webkit-text-stroke:0.18px #1a1a1a;">startpar</div>
<div class="abs td" style="left:1295px;top:706px;width:217px;height:38px;line-height:35px;background:#f4f4f4;color:#1a1a1a;-webkit-text-stroke:0.18px #1a1a1a;">0.59</div>
<div class="abs td" style="left:1512px;top:706px;width:183px;height:38px;line-height:35px;background:#f4f4f4;color:#1a1a1a;-webkit-text-stroke:0.18px #1a1a1a;letter-spacing:-0.35px;">SOFTWARE</div>
<div class="abs td" style="left:1695px;top:706px;width:184px;height:38px;line-height:35px;background:#f4f4f4;color:#1a1a1a;-webkit-text-stroke:0.18px #1a1a1a;">2</div>
<div class="abs td" style="left:1071px;top:744px;width:224px;height:39px;line-height:36px;background:#f9f9f9;color:#555;-webkit-text-stroke:0.1px #555;">publicsuffix</div>
<div class="abs td" style="left:1295px;top:744px;width:217px;height:39px;line-height:36px;background:#f9f9f9;color:#555;-webkit-text-stroke:0.1px #555;">20190415.1030</div>
<div class="abs td" style="left:1512px;top:744px;width:183px;height:39px;line-height:36px;background:#f9f9f9;color:#555;-webkit-text-stroke:0.1px #555;letter-spacing:-0.35px;">SOFTWARE</div>
<div class="abs td" style="left:1695px;top:744px;width:184px;height:39px;line-height:36px;background:#f9f9f9;color:#555;-webkit-text-stroke:0.1px #555;">2</div>
<div class="abs td" style="left:1071px;top:783px;width:224px;height:38px;line-height:35px;background:#f4f4f4;color:#1a1a1a;-webkit-text-stroke:0.18px #1a1a1a;">rsyslog</div>
<div class="abs td" style="left:1295px;top:783px;width:217px;height:38px;line-height:35px;background:#f4f4f4;color:#1a1a1a;-webkit-text-stroke:0.18px #1a1a1a;">8.24.0</div>
<div class="abs td" style="left:1512px;top:783px;width:183px;height:38px;line-height:35px;background:#f4f4f4;color:#1a1a1a;-webkit-text-stroke:0.18px #1a1a1a;letter-spacing:-0.35px;">SOFTWARE</div>
<div class="abs td" style="left:1695px;top:783px;width:184px;height:38px;line-height:35px;background:#f4f4f4;color:#1a1a1a;-webkit-text-stroke:0.18px #1a1a1a;">2</div>
<div class="abs td" style="left:1071px;top:821px;width:224px;height:38px;line-height:35px;background:#f9f9f9;color:#555;-webkit-text-stroke:0.1px #555;">fontconfig</div>
<div class="abs td" style="left:1295px;top:821px;width:217px;height:38px;line-height:35px;background:#f9f9f9;color:#555;-webkit-text-stroke:0.1px #555;">2.11.0</div>
<div class="abs td" style="left:1512px;top:821px;width:183px;height:38px;line-height:35px;background:#f9f9f9;color:#555;-webkit-text-stroke:0.1px #555;letter-spacing:-0.35px;">SOFTWARE</div>
<div class="abs td" style="left:1695px;top:821px;width:184px;height:38px;line-height:35px;background:#f9f9f9;color:#555;-webkit-text-stroke:0.1px #555;">2</div>
<div class="abs td" style="left:1071px;top:859px;width:224px;height:39px;line-height:36px;background:#f4f4f4;color:#1a1a1a;-webkit-text-stroke:0.18px #1a1a1a;">locales</div>
<div class="abs td" style="left:1295px;top:859px;width:217px;height:39px;line-height:36px;background:#f4f4f4;color:#1a1a1a;-webkit-text-stroke:0.18px #1a1a1a;">2.24</div>
<div class="abs td" style="left:1512px;top:859px;width:183px;height:39px;line-height:36px;background:#f4f4f4;color:#1a1a1a;-webkit-text-stroke:0.18px #1a1a1a;letter-spacing:-0.35px;">SOFTWARE</div>
<div class="abs td" style="left:1695px;top:859px;width:184px;height:39px;line-height:36px;background:#f4f4f4;color:#1a1a1a;-webkit-text-stroke:0.18px #1a1a1a;">2</div>
<div class="abs td" style="left:1071px;top:898px;width:224px;height:38px;line-height:35px;background:#f9f9f9;color:#555;-webkit-text-stroke:0.1px #555;"></div>
<div class="abs td" style="left:1295px;top:898px;width:217px;height:38px;line-height:35px;background:#f9f9f9;color:#555;-webkit-text-stroke:0.1px #555;"></div>
<div class="abs td" style="left:1512px;top:898px;width:183px;height:38px;line-height:35px;background:#f9f9f9;color:#555;-webkit-text-stroke:0.1px #555;"></div>
<div class="abs td" style="left:1695px;top:898px;width:184px;height:38px;line-height:35px;background:#f9f9f9;color:#555;-webkit-text-stroke:0.1px #555;"></div>
</body></html>
